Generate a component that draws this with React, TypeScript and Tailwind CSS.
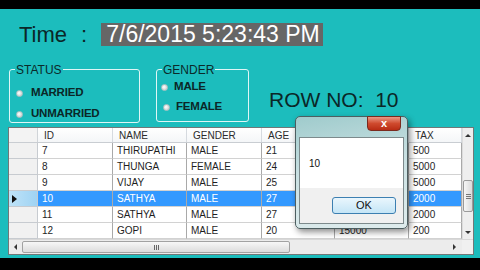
import React from "react";

const narrow = { fontFamily: '"Liberation Sans Narrow", "Liberation Sans", Arial, sans-serif' };

const columns = [
  { name: "ID", w: "w-[75px]" },
  { name: "NAME", w: "w-[74px]" },
  { name: "GENDER", w: "w-[75px]" },
  { name: "AGE", w: "w-[73px]" },
  { name: "", w: "w-[74px]" }, // hidden behind the message box
  { name: "TAX", w: "w-[53px]" },
];

const rows = [
  ["7", "THIRUPATHI", "MALE", "21", "", "500"],
  ["8", "THUNGA", "FEMALE", "24", "", "5000"],
  ["9", "VIJAY", "MALE", "25", "", "5000"],
  ["10", "SATHYA", "MALE", "27", "", "2000"],
  ["11", "SATHYA", "MALE", "27", "", "2000"],
  ["12", "GOPI", "MALE", "20", "15000", "200"],
];

const selectedRow = 3;

function Radio() {
  return (
    <span className="w-[7px] h-[7px] rounded-full shrink-0 border border-[#b8c4c4] bg-[radial-gradient(circle_at_40%_40%,#ffffff,#d6dcdc_60%,#aab4b4)]" />
  );
}

function GroupBox({
  label,
  className,
  children,
}: {
  label: string;
  className: string;
  children: React.ReactNode;
}) {
  return (
    <div className={`relative border border-[#dff6f6] rounded-[3px] ${className}`}>
      <span className="absolute top-[-7px] left-[5px] px-[1px] bg-[#1cbdbd] text-[12px] leading-[14px] text-[#0b2a2a]">
        {label}
      </span>
      {children}
    </div>
  );
}

function Arrow({ dir }: { dir: "up" | "down" | "left" | "right" }) {
  const pts = {
    up: "0,4 3,1 6,4",
    down: "0,1 3,4 6,1",
    left: "4,0 1,3 4,6",
    right: "1,0 4,3 1,6",
  }[dir];
  const size = dir === "up" || dir === "down" ? "w-[6px] h-[5px]" : "w-[5px] h-[6px]";
  const vb = dir === "up" || dir === "down" ? "0 0 6 5" : "0 0 5 6";
  return (
    <svg className={size} viewBox={vb}>
      <polygon points={pts} fill="#333" />
    </svg>
  );
}

function Grid() {
  return (
    <div className="ml-[8px] mt-[4px] w-[466px] h-[128px] border border-[#707878] bg-white flex flex-col overflow-hidden" style={narrow}>
      <div className="flex h-[111px]">
        <div className="w-[453px] flex flex-col overflow-hidden">
          <div className="flex h-[15px] shrink-0 bg-[linear-gradient(#ffffff,#f4f6f8)] border-b border-[#c9cdd2]">
            <div className="w-[29px] shrink-0 border-r border-[#d0d4d8] bg-[#f3f3f3]" />
            {columns.map((c, i) => (
              <div
                key={i}
                className={`${c.w} shrink-0 border-r border-[#d6dadf] pl-[6px] text-[10px] leading-[15px] text-[#2b2b2b]`}
              >
                {c.name}
              </div>
            ))}
          </div>
          {rows.map((r, i) => {
            const sel = i === selectedRow;
            return (
              <div key={r[0]} className="flex h-[16px] shrink-0">
                <div
                  className={`w-[29px] shrink-0 border-r border-b border-[#c7cbd0] flex items-center pl-[3px] ${
                    sel ? "bg-[linear-gradient(90deg,#bfe3f8,#9fd3f3)]" : "bg-[#f1f1f1]"
                  }`}
                >
                  {sel && (
                    <svg className="w-[5px] h-[8px]" viewBox="0 0 5 8">
                      <polygon points="0,0 5,4 0,8" fill="#111" />
                    </svg>
                  )}
                </div>
                {r.map((v, j) => (
                  <div
                    key={j}
                    className={`${columns[j].w} shrink-0 border-r border-b border-r-[#a9a9a9] border-b-[#d2d2d2] pl-[4px] text-[10px] leading-[15px] ${
                      sel ? "bg-[#3399ff] text-white" : "bg-white text-[#1e1e1e]"
                    }`}
                  >
                    {v}
                  </div>
                ))}
              </div>
            );
          })}
        </div>
        <div className="w-[11px] shrink-0 bg-[#eeeeee] border-l border-[#dcdcdc] flex flex-col items-center">
          <div className="h-[14px] flex items-center justify-center">
            <Arrow dir="up" />
          </div>
          <div className="mt-[38px] w-[10px] h-[32px] rounded-[2px] border border-[#9a9a9a] bg-[linear-gradient(90deg,#f6f6f6,#dadada)] flex items-center justify-center">
            <span className="flex flex-col gap-[1px]">
              <span className="w-[5px] h-[1px] bg-[#777]" />
              <span className="w-[5px] h-[1px] bg-[#777]" />
              <span className="w-[5px] h-[1px] bg-[#777]" />
            </span>
          </div>
          <div className="flex-1" />
          <div className="h-[14px] flex items-center justify-center">
            <Arrow dir="down" />
          </div>
        </div>
      </div>
      <div className="flex h-[15px] border-t border-[#d8d8d8]">
        <div className="w-[453px] bg-[#ececec] flex items-center">
          <div className="w-[12px] flex justify-center">
            <Arrow dir="left" />
          </div>
          <div className="ml-[1px] w-[268px] h-[12px] rounded-[2px] border border-[#a2a2a2] bg-[linear-gradient(#f7f7f7,#dcdcdc)] flex items-center justify-center">
            <span className="flex gap-[1px]">
              <span className="w-[1px] h-[5px] bg-[#666]" />
              <span className="w-[1px] h-[5px] bg-[#666]" />
              <span className="w-[1px] h-[5px] bg-[#666]" />
            </span>
          </div>
          <div className="flex-1" />
          <div className="w-[12px] flex justify-center mr-[2px]">
            <Arrow dir="right" />
          </div>
        </div>
        <div className="w-[11px] bg-[#f0f0f0]" />
      </div>
    </div>
  );
}

function MessageBox() {
  return (
    <div
      className="absolute left-[295px] top-[116px] w-[113px] h-[113px] rounded-[5px] border border-[#4d5e60] bg-[linear-gradient(170deg,#9fcbcc,#c9e0e2_45%,#dfeced)] shadow-[2px_3px_6px_rgba(0,0,0,0.45)] flex flex-col"
      style={{ fontFamily: '"Liberation Sans", Arial, sans-serif' }}
    >
      <div className="h-[20px] flex justify-end pr-[6px]">
        <div className="w-[34px] h-[15px] -mt-[1px] rounded-b-[4px] border border-[#7a2a1e] bg-[linear-gradient(#eb9a86,#cf4a2e_50%,#b82c14)] flex items-center justify-center text-white font-bold text-[11px] leading-none">
          x
        </div>
      </div>
      <div className="mx-[3px] mb-[4px] flex-1 border border-[#7d8a8c] flex flex-col">
        <div className="h-[50px] bg-white pl-[9px] pt-[20px] text-[10px] leading-[12px] text-[#111]">10</div>
        <div className="flex-1 bg-[#f0f0f0] pl-[32px] pt-[9px]">
          <div className="w-[64px] h-[17px] rounded-[3px] border border-[#3c7fb1] bg-[linear-gradient(#eaf6fd,#c4e5f6)] flex items-center justify-center text-[11px] text-[#111]">
            OK
          </div>
        </div>
      </div>
    </div>
  );
}

export default function App() {
  return (
    <div className="relative w-[480px] h-[270px] bg-black overflow-hidden" style={{ fontFamily: '"Liberation Sans", Arial, sans-serif' }}>
      <div className="h-[9px]" />
      <div className="h-[249px] bg-[#1cbdbd] flex flex-col pt-[14px]">
        <div className="flex items-center h-[23px] text-[#0b2727]">
          <span className="ml-[19px] text-[22px] leading-[23px]">Time</span>
          <span className="ml-[14px] text-[22px] leading-[23px]">:</span>
          <span className="ml-[14px] h-[23px] w-[222px] bg-[#666666] pl-[5px] text-white text-[23px] leading-[23px]">
            7/6/2015 5:23:43 PM
          </span>
        </div>

        <div className="flex mt-[23px] h-[54px] text-[#0b2727]">
          <GroupBox label="STATUS" className="ml-[9px] w-[131px] h-[54px]">
            <div className="flex flex-col gap-[9px] pt-[17px] pl-[6px]">
              <div className="flex items-center gap-[8px] h-[12px]">
                <Radio />
                <span className="font-bold text-[11.5px] tracking-[-0.2px]">MARRIED</span>
              </div>
              <div className="flex items-center gap-[8px] h-[12px]">
                <Radio />
                <span className="font-bold text-[11.5px] tracking-[-0.2px]">UNMARRIED</span>
              </div>
            </div>
          </GroupBox>

          <GroupBox label="GENDER" className="ml-[16px] w-[93px] h-[53px]">
            <div className="flex flex-col gap-[8px] pt-[11px]">
              <div className="flex items-center gap-[6px] h-[12px] pl-[4px]">
                <Radio />
                <span className="font-bold text-[11.5px] tracking-[-0.2px]">MALE</span>
              </div>
              <div className="flex items-center gap-[6px] h-[12px] pl-[6px]">
                <Radio />
                <span className="font-bold text-[11.5px] tracking-[-0.2px]">FEMALE</span>
              </div>
            </div>
          </GroupBox>

          <span className="ml-[20px] mt-[20px] text-[21px] leading-[21px] whitespace-pre">ROW NO:  10</span>
        </div>

        <Grid />
      </div>
      <MessageBox />
    </div>
  );
}
